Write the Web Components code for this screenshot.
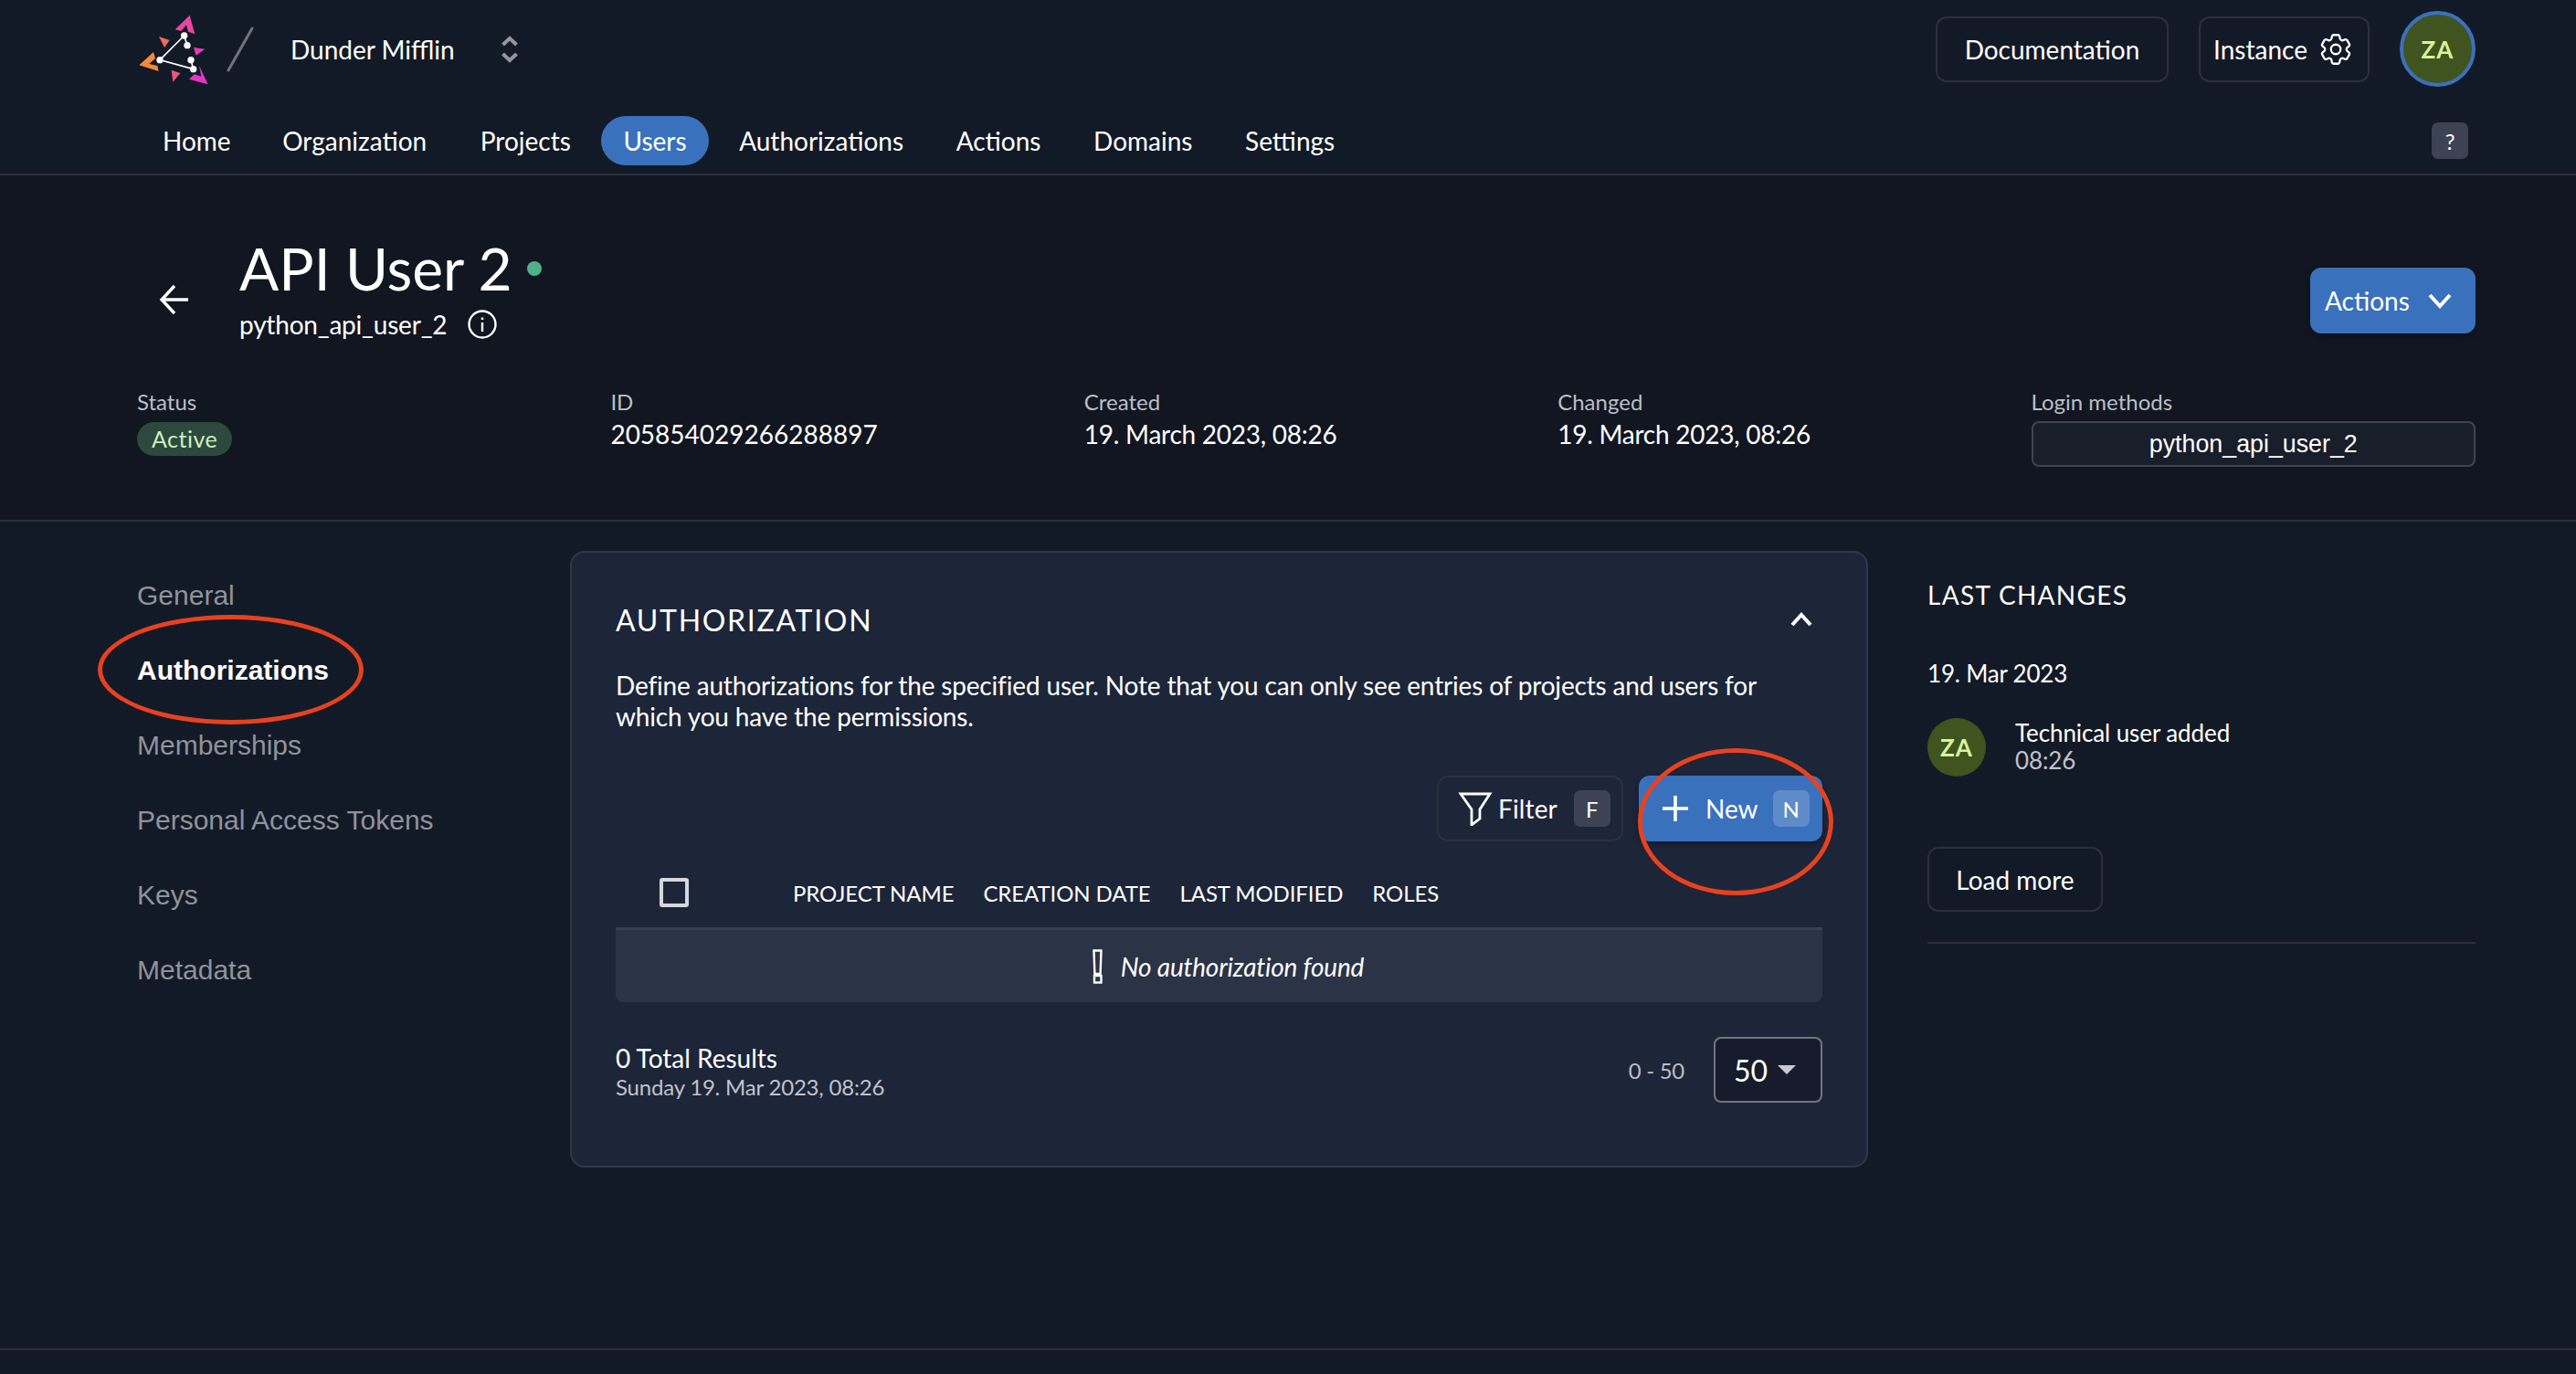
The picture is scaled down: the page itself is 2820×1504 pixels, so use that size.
<!DOCTYPE html>
<html lang="en">
<head>
<meta charset="utf-8">
<title>API User 2</title>
<style>
  html, body { margin: 0; height: 100%; }
  body {
    background: #131a27;
    color: #fff;
    font-family: Lato, "Open Sans", sans-serif;
    font-size: 28px;
    overflow: hidden;
  }
  #page { display: flex; flex-direction: column; height: 1504px; }
</style>
</head>
<body>
<div id="page">
  <z-header>
    <z-button slot="actions" style="width:255px">Documentation</z-button>
    <z-button slot="actions" style="width:187px;gap:10px">Instance
      <svg slot="icon" width="42" height="42" viewBox="0 0 24 24" fill="none" stroke="#fff" stroke-width="1.3" stroke-linejoin="round"><path d="M9.594 3.94c.09-.542.56-.94 1.11-.94h2.593c.55 0 1.02.398 1.11.94l.213 1.281c.063.374.313.686.645.87.074.04.147.083.22.127.324.196.72.257 1.075.124l1.217-.456a1.125 1.125 0 011.37.49l1.296 2.247a1.125 1.125 0 01-.26 1.431l-1.003.827c-.293.24-.438.613-.431.992a6.759 6.759 0 010 .255c-.007.378.138.75.43.99l1.005.828c.424.35.534.954.26 1.43l-1.298 2.247a1.125 1.125 0 01-1.369.491l-1.217-.456c-.355-.133-.75-.072-1.076.124a6.57 6.57 0 01-.22.128c-.331.183-.581.495-.644.869l-.213 1.28c-.09.543-.56.941-1.11.941h-2.594c-.55 0-1.02-.398-1.11-.94l-.213-1.281c-.062-.374-.312-.686-.644-.87a6.52 6.52 0 01-.22-.127c-.325-.196-.72-.257-1.076-.124l-1.217.456a1.125 1.125 0 01-1.369-.49l-1.297-2.247a1.125 1.125 0 01.26-1.431l1.004-.827c.292-.24.437-.613.43-.992a6.932 6.932 0 010-.255c.007-.378-.138-.75-.43-.99l-1.004-.828a1.125 1.125 0 01-.26-1.43l1.297-2.247a1.125 1.125 0 011.37-.491l1.216.456c.356.133.751.072 1.076-.124.072-.044.146-.087.22-.128.332-.183.582-.495.644-.869l.214-1.281z"/><circle cx="12" cy="12" r="3"/></svg>
    </z-button>
    <z-avatar slot="actions" ring>ZA</z-avatar>
  </z-header>

  <z-detail-head>
    <z-meta label="Status"><z-state>Active</z-state></z-meta>
    <z-meta label="ID">205854029266288897</z-meta>
    <z-meta label="Created" style="letter-spacing:-.25px">19. March 2023, 08:26</z-meta>
    <z-meta label="Changed" style="letter-spacing:-.25px">19. March 2023, 08:26</z-meta>
    <z-meta label="Login methods"><z-login-box>python_api_user_2</z-login-box></z-meta>
  </z-detail-head>

  <z-layout>
    <z-side-nav slot="side"></z-side-nav>
    <z-auth-card slot="main"></z-auth-card>
    <z-changes slot="aside"></z-changes>
  </z-layout>

  <z-footer></z-footer>
</div>

<script>
function define(name, html) {
  const template = document.createElement('template');
  template.innerHTML = html;
  customElements.define(name, class extends HTMLElement {
    constructor() {
      super();
      this.attachShadow({ mode: 'open' }).appendChild(template.content.cloneNode(true));
    }
  });
}

define('z-button', `
<style>
  :host { display: inline-flex; box-sizing: border-box; height: 72px; align-items: center; justify-content: center; gap: 8px;
    border: 2px solid #2c303d; border-radius: 12px; color: #fff; font-size: 28px; white-space: nowrap; }
  :host([primary]) { background: #3a71bd; border-color: #3a71bd; box-shadow: 0 3px 8px rgba(0,0,0,.3); }
  ::slotted(svg) { display: block; }
</style>
<slot></slot><slot name="icon"></slot>`);

define('z-kbd', `
<style>
  :host { display: inline-flex; align-items: center; justify-content: center; width: 40px; height: 40px; border-radius: 7px;
    background: var(--kbd-bg, #3d4354); color: #fff; font-size: 24px; }
</style>
<slot></slot>`);

define('z-avatar', `
<style>
  :host { display: inline-flex; box-sizing: border-box; width: 64px; height: 64px; align-items: center; justify-content: center;
    border-radius: 50%; background: #40541f; color: #d9f39b; font-size: 26px; font-weight: 700; letter-spacing: 1px; flex: none; }
  :host([ring]) { width: 83px; height: 83px; border: 4px solid #3a71bd; }
</style>
<slot></slot>`);

define('z-header', `
<style>
  :host { display: block; box-sizing: border-box; height: 192px; border-bottom: 2px solid #2d303c; padding: 0 110px 0 150px; }
  .top { display: flex; align-items: center; height: 107px; }
  .logo { display: block; }
  .slash { margin-left: 18px; display: block; }
  .org { margin-left: 40px; font-size: 28px; }
  .switch { margin-left: 51px; display: block; }
  .actions { margin-left: auto; display: flex; align-items: center; gap: 33px; }
  .nav { display: flex; align-items: center; height: 54px; margin-top: 20px; }
  .nav a { display: block; line-height: 54px; padding: 0 23px; border-radius: 27px; margin-right: 11.6px; color: #fff; white-space: nowrap; }
  .nav a.org-link { margin-left: -1px; margin-right: 12.6px; }
  .nav a.on { background: #3a71bd; padding: 0 24px; margin: 0 10.6px 0 -1px; }
  .nav .help { margin: 0 8px 0 auto; }
</style>
<div class="top">
  <svg class="logo" width="80" height="80" viewBox="30 10 240 240">
    <path d="M155 65L203 18L220 80L198 72L192 50L175 70Z" fill="#e9479f"/>
    <path d="M37 182L84 139L90 160L70 178L97 184L101 202Z" fill="#f48a38"/>
    <path d="M234 184L263 245L201 228L218 212L241 219Z" fill="#e535c5"/>
    <path d="M102 88L137 100L120 124Z" fill="#ee6a5c"/>
    <path d="M216 124L253 129L224 150Z" fill="#e53cbb"/>
    <path d="M143 198L172 208L148 237Z" fill="#e8587a"/>
    <path d="M185 85L105 165L215 195M185 85L195 117M215 195L207 165" fill="none" stroke="#fff" stroke-width="5"/>
    <g fill="#fff"><circle cx="105" cy="165" r="11"/><circle cx="185" cy="85" r="11"/><circle cx="215" cy="195" r="11"/><circle cx="195" cy="117" r="11"/><circle cx="207" cy="165" r="11"/></g>
  </svg>
  <svg class="slash" width="30" height="50" viewBox="0 0 30 50"><path d="M2 48L28 2" stroke="#70747d" stroke-width="3" stroke-linecap="round"/></svg>
  <span class="org">Dunder Mifflin</span>
  <svg class="switch" width="18" height="30" viewBox="0 0 18 30" fill="none" stroke="#94969d" stroke-width="4"><path d="M1.5 10L9 3L16.5 10M1.5 20L9 27L16.5 20"/></svg>
  <div class="actions"><slot name="actions"></slot></div>
</div>
<nav class="nav">
  <a style="margin-left:5px">Home</a><a class="org-link">Organization</a><a>Projects</a><a class="on">Users</a><a>Authorizations</a><a>Actions</a><a>Domains</a><a>Settings</a>
  <z-kbd class="help">?</z-kbd>
</nav>`);

define('z-meta', `
<style>
  :host { display: block; min-width: 0; }
  .label { font-size: 24px; line-height: 30px; color: #bcbfc6; letter-spacing: 0; }
  .value { font-size: 28px; line-height: 36px; margin-top: 2px; }
</style>
<div class="label"></div>
<div class="value"><slot></slot></div>`);
customElements.whenDefined('z-meta').then(() => {
  document.querySelectorAll('z-meta').forEach(m => {
    m.shadowRoot.querySelector('.label').textContent = m.getAttribute('label');
  });
});

define('z-state', `
<style>
  :host { display: inline-block; height: 37px; line-height: 37px; padding: 0 16px; margin-top: 5px; border-radius: 19px;
    background: #2d493d; color: #cfeec3; font-size: 25px; letter-spacing: .5px; vertical-align: top; }
</style>
<slot></slot>`);

define('z-login-box', `
<style>
  :host { display: block; box-sizing: border-box; height: 50px; line-height: 46px; margin-top: 6px; text-align: center;
    background: #191e2b; border: 2px solid #3f4450; border-radius: 8px; font-family: "Liberation Sans", Arial, sans-serif; font-size: 26.8px; }
</style>
<slot></slot>`);

define('z-detail-head', `
<style>
  :host { display: block; box-sizing: border-box; height: 379px; padding: 63px 110px 0 150px; border-bottom: 2px solid #2d303c; background: #111621; }
  .row { display: flex; align-items: flex-start; height: 170px; }
  .back { display: block; margin: 56px 0 0 24px; }
  .who { margin-left: 54px; }
  h1 { margin: 0; font-size: 64px; font-weight: 400; line-height: 78px; display: flex; align-items: center; }
  .dot { width: 16px; height: 16px; border-radius: 50%; background: #4fb286; margin-left: 16px; }
  .sub { display: flex; align-items: center; font-size: 28px; letter-spacing: -.2px; line-height: 40px; margin-top: 2px; }
  .sub svg { margin-left: 23px; display: block; }
  .actions { margin: 38px 0 0 auto; width: 181px; gap: 20px; justify-content: flex-start; padding-left: 14px; }
  .grid { display: grid; grid-template-columns: repeat(5, 1fr); column-gap: 32px; }
</style>
<div class="row">
  <svg class="back" width="34" height="34" viewBox="0 0 34 34" fill="none" stroke="#fff" stroke-width="3.4"><path d="M32 17H3M17 2L3 17L17 32"/></svg>
  <div class="who">
    <h1>API User 2<span class="dot"></span></h1>
    <div class="sub">python_api_user_2
      <svg width="32" height="32" viewBox="0 0 32 32" fill="none" stroke="#fff" stroke-width="2.4"><circle cx="16" cy="16" r="14.5"/><path d="M16 14V24M16 8.5V11"/></svg>
    </div>
  </div>
  <z-button class="actions" primary>Actions
    <svg slot="icon" width="26" height="18" viewBox="0 0 26 18" fill="none" stroke="#fff" stroke-width="4"><path d="M2 3L13 15L24 3"/></svg>
  </z-button>
</div>
<div class="grid"><slot></slot></div>`);

define('z-layout', `
<style>
  :host { display: grid; flex: 1; grid-template-columns: 474px 1421px 1fr; padding: 32px 110px 0 150px; align-items: start; }
</style>
<slot name="side"></slot><slot name="main"></slot><slot name="aside"></slot>`);

define('z-annotation', `
<style>
  :host { display: block; position: absolute; box-sizing: border-box; border: 5px solid #e8411f; border-radius: 50%; pointer-events: none; }
</style>`);

define('z-side-nav', `
<style>
  :host { display: block; position: relative; padding-top: 8px; font-family: "Liberation Sans", Arial, sans-serif; font-size: 30px; }
  a { display: block; line-height: 82px; color: #90939b; }
  a.on { color: #fff; font-weight: 700; }
  z-annotation { left: -43px; top: 70px; width: 291px; height: 120px; }
</style>
<a>General</a><a class="on">Authorizations</a><a>Memberships</a><a>Personal Access Tokens</a><a>Keys</a><a>Metadata</a>
<z-annotation></z-annotation>`);

define('z-auth-card', `
<style>
  :host { display: block; box-sizing: border-box; height: 675px; padding: 48px 48px 0; background: #1d2539; border: 2px solid #2f374b; border-radius: 16px; }
  .head { display: flex; align-items: center; justify-content: space-between; height: 50px; }
  h2 { margin: 0; font-size: 32px; font-weight: 400; letter-spacing: 1.7px; }
  .chev { display: block; margin-right: 10px; }
  p { margin: 30px 0 0; font-size: 28px; line-height: 34px; letter-spacing: -.17px; max-width: 1290px; }
  .tools { display: flex; justify-content: flex-end; gap: 17px; margin-top: 48px; position: relative; }
  z-annotation { right: -12px; top: -30px; width: 214px; height: 161px; }
  .filter { width: 204px; gap: 6px; justify-content: flex-start; padding-left: 21px; letter-spacing: .15px; }
  .filter z-kbd { margin-left: 12px; }
  .new { width: 201px; gap: 18px; justify-content: flex-start; padding-left: 23px; --kbd-bg: #5f8bc9; }
  .new z-kbd { margin-left: -2px; }
  .new svg, .filter svg { order: -1; }
  .cols { display: flex; align-items: center; gap: 32px; height: 76px; margin-top: 18px; font-size: 24px; letter-spacing: -.1px; white-space: nowrap; }
  .box { box-sizing: border-box; width: 32px; height: 32px; margin: 0 82px 0 48px; border: 4px solid #d5d8dd; border-radius: 3px; }
  .empty { display: flex; align-items: center; justify-content: center; gap: 20px; box-sizing: border-box; height: 82px; padding-left: 20px; background: #2b3346; border-top: 3px solid #373f54; border-radius: 0 0 8px 8px; font-style: italic; letter-spacing: -.2px; }
  .foot { display: flex; align-items: center; margin-top: 38px; }
  .sum { padding-top: 3px; }
  .total { line-height: 34px; }
  .date { font-size: 24px; letter-spacing: -.2px; line-height: 28px; margin-top: 1px; color: #c0c3ca; }
  .range { margin-left: auto; font-size: 24px; letter-spacing: -.3px; color: #bcbfc6; }
  .select { display: flex; align-items: center; box-sizing: border-box; width: 119px; height: 72px; margin-left: 32px; padding-left: 20px; gap: 11px; background: #161c2b; border: 2px solid #71757f; border-radius: 8px; font-size: 32px; }
  .select i { width: 0; height: 0; border: 10px solid transparent; border-top-color: #c9cbd1; border-bottom: 0; }
</style>
<div class="head">
  <h2>AUTHORIZATION</h2>
  <svg class="chev" width="26" height="18" viewBox="0 0 26 18" fill="none" stroke="#fff" stroke-width="4"><path d="M3 15L13 4L23 15"/></svg>
</div>
<p>Define authorizations for the specified user. Note that you can only see entries of projects and users for which you have the permissions.</p>
<div class="tools">
  <z-button class="filter">
    <svg width="38" height="38" viewBox="0 0 38 38" fill="none" stroke="#fff" stroke-width="2.8"><path d="M3 3H35L24 20V30L15 37V20Z"/></svg>
    Filter <z-kbd>F</z-kbd>
  </z-button>
  <z-button class="new" primary>
    <svg width="30" height="30" viewBox="0 0 30 30" fill="none" stroke="#fff" stroke-width="3.6"><path d="M15 1V29M1 15H29"/></svg>
    New <z-kbd>N</z-kbd>
  </z-button>
  <z-annotation></z-annotation>
</div>
<div class="cols"><span class="box"></span><span>PROJECT NAME</span><span>CREATION DATE</span><span>LAST MODIFIED</span><span>ROLES</span></div>
<div class="empty">
  <svg width="11" height="38" viewBox="0 0 11 38" fill="none" stroke="#fff" stroke-width="2.4"><path d="M1.5 1.5H9.5L8.6 27H2.4Z"/><rect x="2" y="29" width="7.5" height="7.5"/></svg>
  <span>No authorization found</span>
</div>
<div class="foot">
  <div class="sum"><div class="total">0 Total Results</div><div class="date">Sunday 19. Mar 2023, 08:26</div></div>
  <span class="range">0 - 50</span>
  <div class="select">50<i></i></div>
</div>`);

define('z-changes', `
<style>
  :host { display: block; margin-left: 65px; padding-top: 30px; }
  h3 { margin: 0; font-size: 28px; font-weight: 400; line-height: 36px; letter-spacing: 1.3px; }
  .day { margin-top: 51px; font-size: 26px; letter-spacing: -.2px; line-height: 34px; }
  .row { display: flex; gap: 32px; margin-top: 32px; }
  .text { font-size: 26px; letter-spacing: -.1px; line-height: 30px; padding-top: 1px; }
  .time { color: #c0c3ca; }
  z-button { margin-top: 77px; width: 192px; height: 71px; }
  hr { margin: 33px 0 0; border: 0; border-top: 2px solid #2d303c; }
</style>
<h3>LAST CHANGES</h3>
<div class="day">19. Mar 2023</div>
<div class="row">
  <z-avatar>ZA</z-avatar>
  <div class="text">Technical user added<div class="time">08:26</div></div>
</div>
<z-button>Load more</z-button>
<hr>`);

define('z-footer', `
<style>
  :host { display: block; height: 28px; border-top: 2px solid #2d303c; box-sizing: border-box; }
</style>`);
</script>
</body>
</html>
